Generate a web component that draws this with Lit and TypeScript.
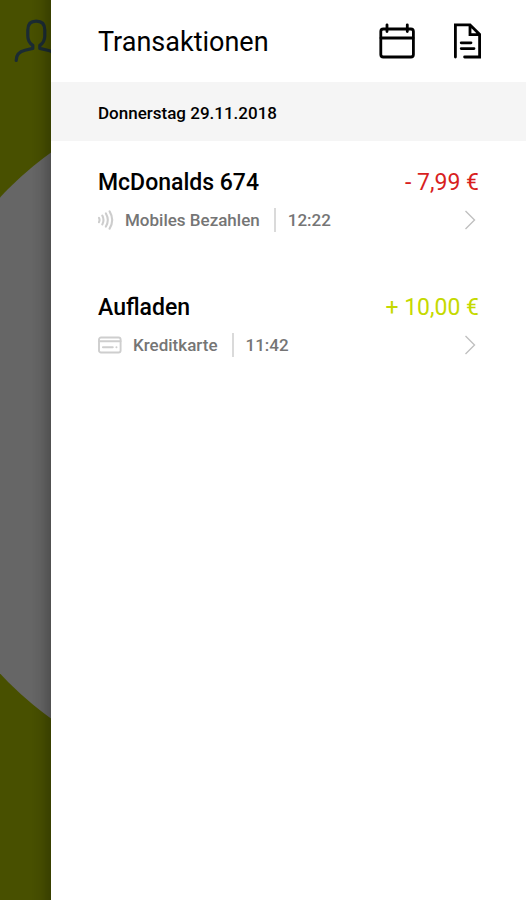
import { LitElement, html, css, svg, nothing } from "lit";
import { customElement, property } from "lit/decorators.js";

type Method = "mobile" | "card";

interface Transaction {
  name: string;
  method: Method;
  label: string;
  time: string;
  amount: string;
  credit: boolean;
}

const transactions: Transaction[] = [
  { name: "McDonalds 674", method: "mobile", label: "Mobiles Bezahlen", time: "12:22", amount: "- 7,99 €", credit: false },
  { name: "Aufladen", method: "card", label: "Kreditkarte", time: "11:42", amount: "+ 10,00 €", credit: true },
];

const mobileIcon = svg`
  <svg width="16" height="20" viewBox="0 0 16 20" fill="none" stroke="#cdcdcd" stroke-width="2.1" stroke-linecap="round" aria-hidden="true">
    <path d="M0.9 7.8Q2.2 10 0.9 12.2M4.3 5.6Q6.7 10 4.3 14.4M7.9 3.4Q11.7 10 7.9 16.6M11.6 1.4Q16.8 10 11.6 18.6" />
  </svg>`;

const cardIcon = svg`
  <svg width="24" height="18" viewBox="0 0 24 18" fill="none" stroke="#cecece" stroke-width="1.9" stroke-linecap="round" aria-hidden="true">
    <rect x="1" y="1.5" width="21.6" height="15" rx="2" />
    <path d="M1 5.3H22.6M4.9 11.3H14.8M18.4 11.3H18.5" />
  </svg>`;

@customElement("transaction-row")
export class TransactionRow extends LitElement {
  @property({ attribute: false }) item?: Transaction;

  static styles = css`
    :host {
      display: block;
    }
    .row {
      display: block;
      width: 100%;
      padding: 26px 47px 33px;
      border: 0;
      background: none;
      font: inherit;
      color: inherit;
      text-align: left;
      cursor: pointer;
    }
    .line {
      display: flex;
      align-items: center;
      justify-content: space-between;
    }
    .top {
      height: 32px;
      font-size: 23px;
      line-height: 32px;
    }
    .name {
      font-weight: 500;
    }
    .amount {
      color: #d81f1f;
    }
    .credit {
      color: #c5d900;
    }
    .bottom {
      margin-top: 8px;
      height: 26px;
      font-size: 17px;
      line-height: 26px;
      font-weight: 500;
      color: #757575;
    }
    .meta {
      display: flex;
      align-items: center;
    }
    .label {
      margin-left: 11px;
      padding-right: 14px;
    }
    .time {
      padding-left: 12px;
      height: 24px;
      line-height: 24px;
      border-left: 2px solid #dadada;
    }
    .chevron {
      margin-right: 3px;
    }
    svg {
      display: block;
    }
  `;

  render() {
    const t = this.item;
    if (!t) return nothing;
    return html`
      <button class="row" type="button">
        <span class="line top">
          <span class="name">${t.name}</span>
          <span class="amount ${t.credit ? "credit" : ""}">${t.amount}</span>
        </span>
        <span class="line bottom">
          <span class="meta">
            ${t.method === "mobile" ? mobileIcon : cardIcon}
            <span class="label">${t.label}</span>
            <span class="time">${t.time}</span>
          </span>
          <svg class="chevron" width="12" height="20" viewBox="0 0 12 20" fill="none" stroke="#c0c0c0" stroke-width="1.4" aria-hidden="true">
            <path d="M1.5 1L10.5 10L1.5 19" />
          </svg>
        </span>
      </button>
    `;
  }
}

@customElement("app-root")
export class AppRoot extends LitElement {
  static styles = css`
    :host {
      display: grid;
      grid-template-columns: 51px minmax(0, 1fr);
      min-height: 100vh;
      background: #fff;
      color: #000;
      font-family: Roboto, "Liberation Sans", sans-serif;
    }
    .behind {
      position: relative;
      overflow: hidden;
      background: #485000;
    }
    .disc {
      position: absolute;
      top: calc(50% - 363px);
      left: -94px;
      width: 697px;
      height: 697px;
      border-radius: 50%;
      background: #666;
    }
    .profile {
      position: absolute;
      top: 18px;
      left: 13px;
      padding: 0;
      border: 0;
      background: none;
    }
    .shade {
      position: absolute;
      inset: 0 0 0 auto;
      width: 20px;
      background: linear-gradient(to right, rgba(0, 0, 0, 0), rgba(0, 0, 0, 0.06) 50%, rgba(0, 0, 0, 0.2));
      border-right: 1px solid rgba(0, 0, 0, 0.2);
      box-sizing: border-box;
      pointer-events: none;
    }
    .header {
      display: flex;
      align-items: center;
      height: 82px;
      padding: 0 45px 0 47px;
    }
    .title {
      flex: 1;
      margin: 0;
      padding-top: 2px;
      font-size: 27px;
      line-height: 36px;
      font-weight: 400;
    }
    .tool {
      margin-left: 34px;
      padding: 0;
      border: 0;
      background: none;
      color: #000;
      cursor: pointer;
    }
    .date {
      margin: 0;
      padding: 19px 47px 16px;
      background: #f5f5f5;
      font-size: 17px;
      line-height: 24px;
      font-weight: 500;
    }
    .list {
      margin: 0;
      padding: 0;
      list-style: none;
    }
    svg {
      display: block;
    }
  `;

  render() {
    return html`
      <div class="behind">
        <div class="disc"></div>
        <button class="profile" type="button" aria-label="Profil">
          <svg width="46" height="46" viewBox="0 0 46 46" fill="none" stroke="#1b2b33" stroke-width="3.2" stroke-linecap="round" stroke-linejoin="round" aria-hidden="true">
            <path d="M3.2 42.4C3.2 36.5 6.5 33.4 12 32.2L19.8 30.4V27.4C16.2 25 14.8 22 14.8 18V12C14.8 6 18 3.2 23.2 3.2S31.8 6 31.8 12V18C31.8 22 30.4 25 26.8 27.4V30.4L34.6 32.2C40 33.4 43.2 36.5 43.2 42.4" />
          </svg>
        </button>
        <div class="shade"></div>
      </div>
      <main class="panel">
        <header class="header">
          <h1 class="title">Transaktionen</h1>
          <button class="tool" type="button" aria-label="Kalender">
            <svg width="36" height="38" viewBox="0 0 36 38" fill="none" stroke="currentColor" stroke-width="2.8" stroke-linecap="round" aria-hidden="true">
              <rect x="1.8" y="7" width="32.6" height="28" rx="2.5" />
              <path d="M2 16H34M8 2.8V9.6M28.3 2.8V9.6" />
            </svg>
          </button>
          <button class="tool" type="button" aria-label="Beleg">
            <svg width="32" height="38" viewBox="0 0 32 38" fill="none" stroke="currentColor" stroke-width="2.8" stroke-linecap="round" stroke-linejoin="miter" aria-hidden="true">
              <path d="M6.4 35V2.8H21L30.6 12.4V35H15.6M21 3V12.6H30M12.2 20.8H22M12.2 26.6H25" />
            </svg>
          </button>
        </header>
        <h2 class="date">Donnerstag 29.11.2018</h2>
        <ul class="list">
          ${transactions.map((t) => html`<li><transaction-row .item=${t}></transaction-row></li>`)}
        </ul>
      </main>
    `;
  }
}
